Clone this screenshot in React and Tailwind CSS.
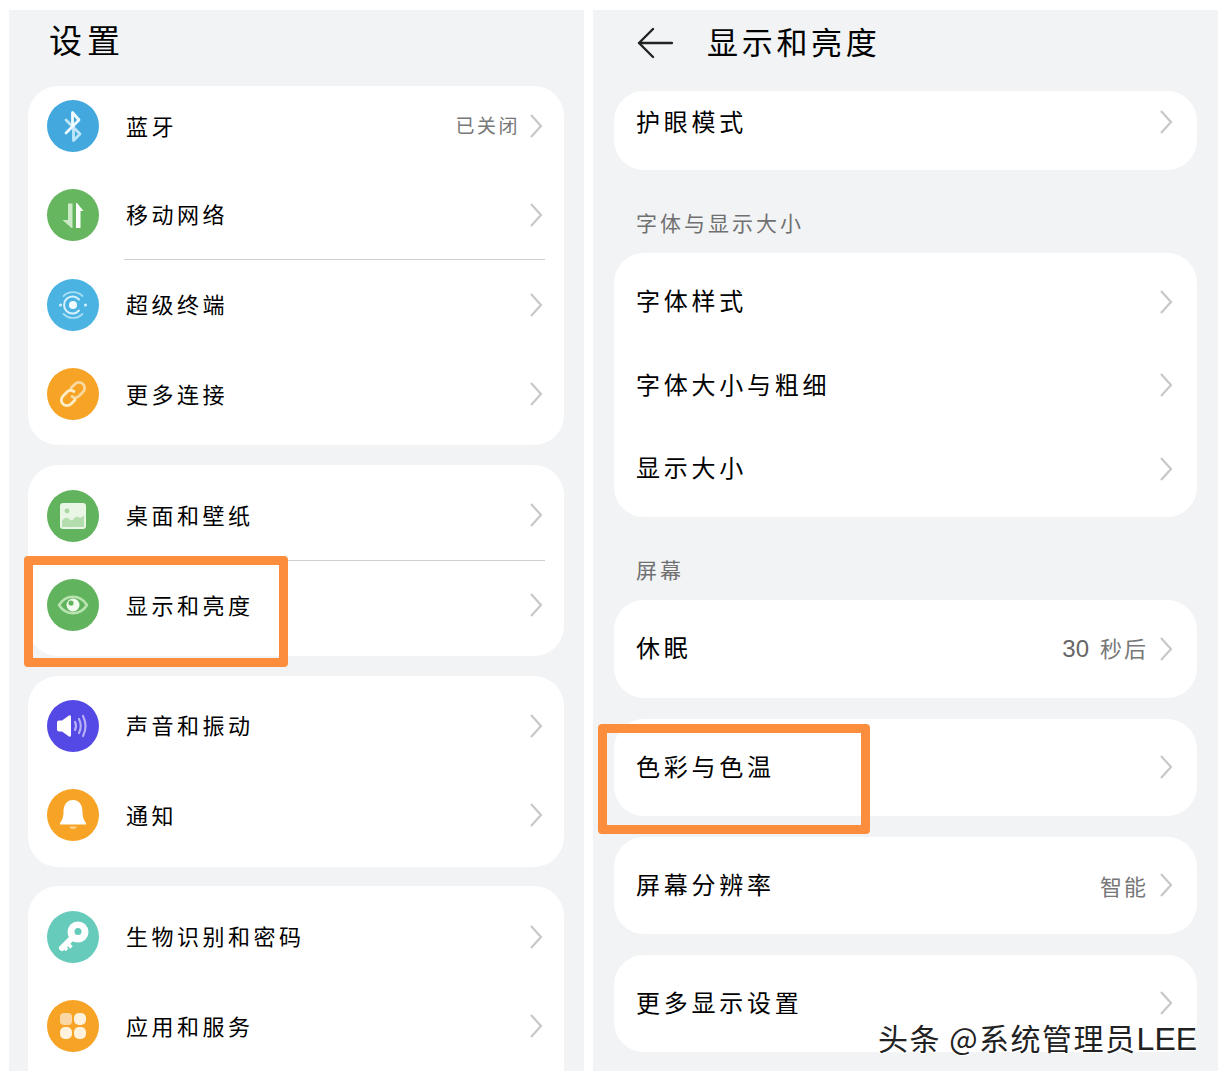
import { Fragment } from "react";

const cjk = { fontFamily: '"Noto Sans CJK SC", "Noto Sans", sans-serif' };

// icon discs, drawn on a 52x52 box
function Disc({ color, children }) {
  return (
    <svg width="52" height="52" viewBox="0 0 52 52" className="shrink-0">
      <circle cx="26" cy="26" r="26" fill={color} />
      {children}
    </svg>
  );
}

const icons = {
  bluetooth: (
    <Disc color="#42a8de">
      <path d="M19 20l14 14-6.500 6.500V25" fill="none" stroke="#bfe6f8" strokeWidth="2.800" strokeLinejoin="round" strokeLinecap="round" />
      <path d="M19 33l13-13-6.500-7.500V26" fill="none" stroke="#f2fbff" strokeWidth="2.800" strokeLinejoin="round" strokeLinecap="round" />
    </Disc>
  ),
  mobile: (
    <Disc color="#65b65f">
      <path d="M21 14.500h4.500V39h-1L15.500 31H21z" fill="#cdeac7" />
      <path d="M29 39V14h1l6.500 8H33.500v17z" fill="#fff" />
    </Disc>
  ),
  terminal: (
    <Disc color="#4ab3e2">
      <g fill="none" strokeLinecap="round">
        <path d="M16.500 17a13.500 13.500 0 0 1 19 0M35.500 35a13.500 13.500 0 0 1-19 0" stroke="#a8def4" strokeWidth="1.800" />
        <path d="M32 20.500a8.500 8.500 0 1 0 0 11" stroke="#d6f1fb" strokeWidth="2" />
      </g>
      <circle cx="26" cy="26" r="4" fill="#f4fcff" />
      <circle cx="13.500" cy="26" r="1.500" fill="#d6f1fb" />
      <circle cx="38.500" cy="26" r="1.500" fill="#d6f1fb" />
    </Disc>
  ),
  link: (
    <Disc color="#f7a325">
      <g fill="none" strokeWidth="2.800" strokeLinecap="round">
        <path d="M24 20l4-4a5.500 5.500 0 0 1 8 8l-4 4a5.500 5.500 0 0 1-7 .5" stroke="#f9d9a0" />
        <path d="M28 32l-4 4a5.500 5.500 0 0 1-8-8l4-4a5.500 5.500 0 0 1 7-.5" stroke="#fdeec8" />
      </g>
    </Disc>
  ),
  wallpaper: (
    <Disc color="#62b35d">
      <rect x="13" y="13" width="26" height="26" rx="3" fill="#e9f6e6" />
      <circle cx="20" cy="21" r="2.400" fill="#a9d8a2" />
      <path d="M15 37v-6c3-4 6-4 8-1 3 2 5-5 8-3 2 1 4 1 6-2v12z" fill="#b3ddac" />
    </Disc>
  ),
  eye: (
    <Disc color="#62b35d">
      <path d="M12 26c7-11 21-11 28 0-7 11-21 11-28 0z" fill="none" stroke="#b9e4b2" strokeWidth="2.600" strokeLinejoin="round" />
      <circle cx="26" cy="26" r="6.500" fill="#f2fbf0" />
      <circle cx="24" cy="24" r="2.600" fill="#62b35d" />
    </Disc>
  ),
  sound: (
    <Disc color="#5549e6">
      <path d="M10 22.500q0-2 2-2h3l7-5q2-1 2 1.500v18q0 2.500-2 1.500l-7-5h-3q-2 0-2-2z" fill="#fff" />
      <g fill="none" stroke="#b7b0f6" strokeWidth="2.200" strokeLinecap="round">
        <path d="M28 22q2 4 0 8" />
        <path d="M32 19q3.500 7 0 14" />
        <path d="M36 16q5 10 0 20" />
      </g>
    </Disc>
  ),
  bell: (
    <Disc color="#f7a325">
      <path d="M26 11c-7 0-9.500 6-9.500 12 0 6-2 9-3.500 11v1.500h26V34c-1.500-2-3.500-5-3.500-11 0-6-2.500-12-9.500-12z" fill="#fff" />
      <path d="M22 37.500h8q-1 2.500-4 2.500t-4-2.500z" fill="#fbd18c" />
    </Disc>
  ),
  key: (
    <Disc color="#66cbba">
      <path d="M31 21L15 37" stroke="#fff" strokeWidth="6" strokeLinecap="round" />
      <path d="M21 33l3.500 3.500M17.500 36.500l2.500 2.500" stroke="#fff" strokeWidth="3.500" />
      <circle cx="31" cy="21" r="10.500" fill="#fff" />
      <circle cx="31" cy="20.500" r="3.500" fill="#66cbba" />
    </Disc>
  ),
  apps: (
    <Disc color="#f7a325">
      <rect x="13" y="13" width="12" height="12" rx="4" fill="#fbd7a6" />
      <rect x="27" y="13" width="12" height="12" rx="5" fill="#fff3dd" />
      <rect x="13" y="27" width="12" height="12" rx="5" fill="#fff3dd" />
      <rect x="27" y="27" width="12" height="12" rx="5" fill="#fff3dd" />
    </Disc>
  ),
};

const Chevron = () => (
  <svg width="14" height="26" viewBox="0 0 14 26" fill="none" stroke="#c8c8c8" strokeWidth="2.200" className="shrink-0">
    <path d="M2 2l10 11L2 24" />
  </svg>
);

function SettingRow({ icon, label, value, divider, first }) {
  return (
    <div className={`flex items-center pl-[19px] ${first ? "h-[80px] mb-[4.500px]" : "h-[89.500px]"}`}>
      {icons[icon]}
      <div className={`flex-1 h-full ml-[25px] mr-[19px] pr-[2px] flex items-center ${divider ? "border-b border-[#cfcfcf]" : ""}`}>
        <span className="flex-1 pl-[2px] pb-[3px] text-[22px] leading-none tracking-[3.500px] text-black">{label}</span>
        {value && <span className="mr-[9px] pb-[3px] text-[19px] leading-none tracking-[2.500px] text-[#777]">{value}</span>}
        <Chevron />
      </div>
    </div>
  );
}

function DisplayRow({ label, value, className }) {
  return (
    <div className={`flex items-center pl-[22px] pr-[24px] ${className}`}>
      <span className="flex-1 pb-[3px] text-[24px] leading-none tracking-[3.750px] text-black">{label}</span>
      {value && <span className="mr-[11px] pb-[1px] text-[22px] leading-none tracking-[2px] text-[#777]">{value}</span>}
      <Chevron />
    </div>
  );
}

const SubHead = ({ children }) => (
  <div className="h-[83px] flex items-end pb-[20px] pl-[22px] text-[21px] leading-none tracking-[3px] text-[#707070]">{children}</div>
);

export default function App() {
  return (
    <div className="relative h-[1080px] bg-white pt-[10px] pl-[9px] flex gap-[9px] overflow-hidden" style={cjk}>
      {/* 设置 */}
      <div className="w-[575px] h-[1061px] bg-[#f1f3f5] overflow-hidden pl-[19px] pr-[20px]">
        <div className="h-[76px] pl-[21px] pt-[13px] text-[33px] leading-none tracking-[5px] text-black">设置</div>
        <div className="bg-white rounded-[30px] pb-[6px] mb-[20px]">
          <SettingRow icon="bluetooth" label="蓝牙" value="已关闭" first />
          <SettingRow icon="mobile" label="移动网络" divider />
          <SettingRow icon="terminal" label="超级终端" />
          <SettingRow icon="link" label="更多连接" />
        </div>
        <div className="bg-white rounded-[30px] pt-[6px] pb-[6px] mb-[20px]">
          <SettingRow icon="wallpaper" label="桌面和壁纸" divider />
          <SettingRow icon="eye" label="显示和亮度" />
        </div>
        <div className="bg-white rounded-[30px] pt-[5px] pb-[7px] mb-[19px]">
          <SettingRow icon="sound" label="声音和振动" />
          <SettingRow icon="bell" label="通知" />
        </div>
        <div className="bg-white rounded-[30px] pt-[6px] pb-[30px]">
          <SettingRow icon="key" label="生物识别和密码" />
          <SettingRow icon="apps" label="应用和服务" />
        </div>
      </div>

      {/* 显示和亮度 */}
      <div className="w-[625px] h-[1061px] bg-[#f1f3f5] overflow-hidden px-[21px]">
        <div className="h-[81px] flex items-start pt-[17px] pl-[23px]">
          <svg width="36" height="32" viewBox="0 0 36 32" fill="none" stroke="#222" strokeWidth="2.400" strokeLinecap="round" strokeLinejoin="round" className="shrink-0">
            <path d="M16 2L2 16l14 14M2 16h33" />
          </svg>
          <span className="ml-[34px] -mt-[2px] text-[31px] leading-none tracking-[3.700px] text-black">显示和亮度</span>
        </div>
        <div className="bg-white rounded-[30px] h-[79px]">
          <DisplayRow label="护眼模式" className="h-[62px]" />
        </div>
        <SubHead>字体与显示大小</SubHead>
        <div className="bg-white rounded-[30px] pt-[7px] pb-[6px]">
          <DisplayRow label="字体样式" className="h-[83.500px]" />
          <DisplayRow label="字体大小与粗细" className="h-[83.500px]" />
          <DisplayRow label="显示大小" className="h-[83.500px]" />
        </div>
        <SubHead>屏幕</SubHead>
        <div className="flex flex-col gap-[21px]">
          <div className="bg-white rounded-[30px]">
            <DisplayRow
              label="休眠"
              value={
                <Fragment>
                  <span className="font-['Liberation_Sans'] text-[24px] text-[#666] tracking-normal mr-[11px]">30</span>秒后
                </Fragment>
              }
              className="h-[98px]"
            />
          </div>
          <div className="bg-white rounded-[30px]"><DisplayRow label="色彩与色温" className="h-[97px]" /></div>
          <div className="bg-white rounded-[30px]"><DisplayRow label="屏幕分辨率" value="智能" className="h-[97px]" /></div>
          <div className="bg-white rounded-[30px]"><DisplayRow label="更多显示设置" className="h-[97px]" /></div>
        </div>
      </div>

      {/* 高亮框 */}
      <div className="absolute left-[24px] top-[556px] w-[264px] h-[111px] border-[9px] border-[#fb8d3d] rounded-[4px]" />
      <div className="absolute left-[598px] top-[724px] w-[272px] h-[110px] border-[9px] border-[#fb8d3d] rounded-[4px]" />

      {/* 水印 */}
      <div className="absolute left-[878px] top-[1020px] whitespace-nowrap text-[30px] leading-[34px] tracking-[1.500px] text-[#222] [text-shadow:1px_1px_0_#fff,-1px_-1px_0_#fff,1px_-1px_0_#fff,-1px_1px_0_#fff]">
        头条 @系统管理员<span className="font-['Liberation_Sans'] text-[32px] tracking-normal">LEE</span>
      </div>
    </div>
  );
}
